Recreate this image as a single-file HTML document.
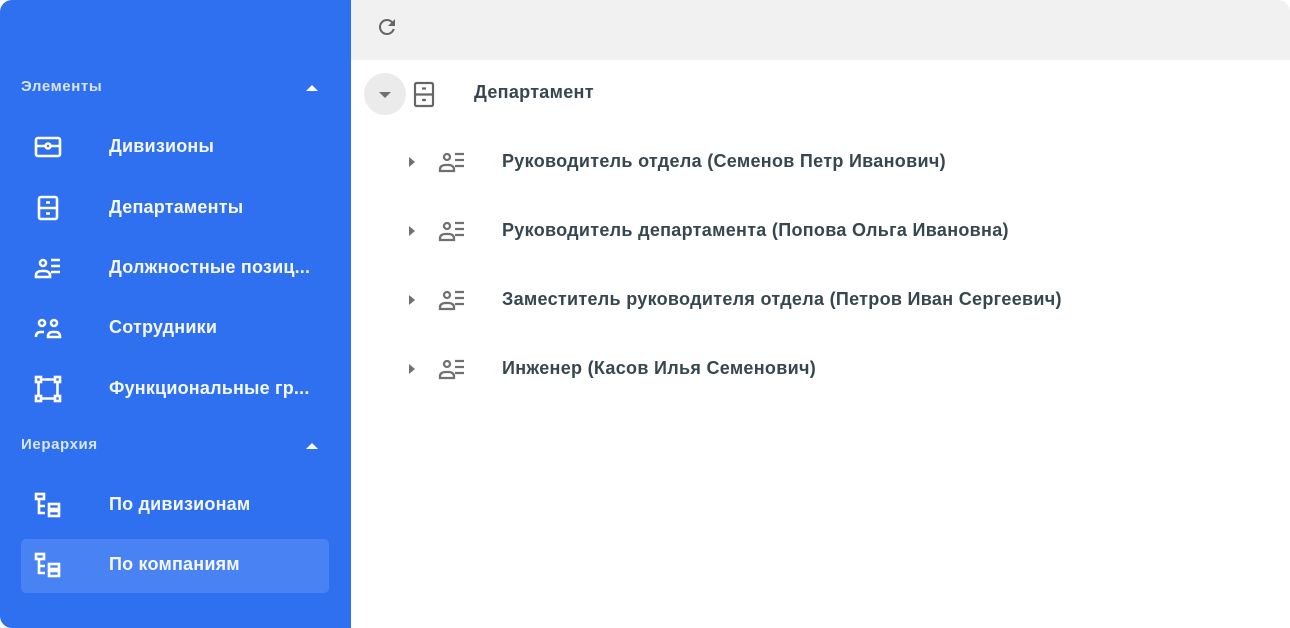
<!DOCTYPE html>
<html><head><meta charset="utf-8"><style>
*{margin:0;padding:0;box-sizing:border-box}
body{width:1290px;height:628px;background:#fff;font-family:"Liberation Sans",sans-serif;overflow:hidden;position:relative}
.frame{position:absolute;left:0;top:0;width:1290px;height:628px;border-radius:12px;overflow:hidden;background:#fff}
.side{position:absolute;left:0;top:0;width:351px;height:628px;background:#2f70f0;color:#fff}
.hdr{position:absolute;left:21px;font-size:15px;font-weight:bold;letter-spacing:0.6px;color:rgba(255,255,255,.82)}
.up{position:absolute;left:306px;width:0;height:0;border-left:6px solid transparent;border-right:6px solid transparent;border-bottom:6px solid #fff}
.it{position:absolute;left:109px;font-size:18px;font-weight:bold;letter-spacing:0.2px;color:#fff;opacity:.95}
.ic{position:absolute;left:34px}
.sel{position:absolute;left:21px;top:539px;width:308px;height:54px;background:rgba(255,255,255,.13);border-radius:5px}
.tb{position:absolute;left:351px;top:0;right:0;height:60px;background:#f1f1f1}
.t{position:absolute;font-size:18px;font-weight:bold;letter-spacing:0.3px;color:#37474f}
.tri{position:absolute;left:409px;width:0;height:0;border-top:5px solid transparent;border-bottom:5px solid transparent;border-left:6px solid #707070}
.circ{position:absolute;left:364px;top:73px;width:42px;height:42px;border-radius:50%;background:#ebebeb}
</style></head><body><div class="frame">
<div class="side">
<div class="hdr" style="top:78px">Элементы</div><div class="up" style="top:85px"></div>
<svg class="ic" style="top:135px" width="28" height="24" viewBox="0 0 28 24" fill="none" stroke="#fff" stroke-width="2.6"><rect x="2" y="3" width="24" height="18" rx="2"/><path d="M2 11h9M17 11h9"/><circle cx="14" cy="11" r="2.5"/></svg>
<div class="it" style="top:136px">Дивизионы</div>
<svg class="ic" style="top:195px;left:37px" width="22" height="26" viewBox="0 0 22 26" fill="none" stroke="#fff" stroke-width="2.6"><rect x="2" y="2" width="18" height="22" rx="2"/><path d="M2 13h18M9 7.5h4M9 18.5h4"/></svg>
<div class="it" style="top:197px">Департаменты</div>
<svg class="ic" style="top:256px" width="28" height="24" viewBox="0 0 28 24" fill="none" stroke="#fff" stroke-width="2.6"><circle cx="9" cy="7" r="3"/><path d="M2 21v-2a5 4 0 0 1 5-4h4a5 4 0 0 1 5 4v2zM17 4h9M17 10h9M17 16h9"/></svg>
<div class="it" style="top:257px">Должностные позиц...</div>
<svg class="ic" style="top:316px" width="28" height="24" viewBox="0 0 28 24" fill="none" stroke="#fff" stroke-width="2.6"><circle cx="8" cy="7" r="3"/><circle cx="20" cy="7" r="3"/><path d="M2 21v-1a4 4 0 0 1 4-4h4M14 21v-1a4 4 0 0 1 4-4h4a4 4 0 0 1 4 4v1z"/></svg>
<div class="it" style="top:317px">Сотрудники</div>
<svg class="ic" style="top:375px" width="28" height="28" viewBox="0 0 28 28" fill="none" stroke="#fff" stroke-width="2.6"><rect x="2" y="2" width="5" height="5"/><rect x="21" y="2" width="5" height="5"/><rect x="2" y="21" width="5" height="5"/><rect x="21" y="21" width="5" height="5"/><path d="M7 4.5h14M7 23.5h14M4.5 7v14M23.5 7v14"/></svg>
<div class="it" style="top:378px">Функциональные гр...</div>
<div class="hdr" style="top:436px">Иерархия</div><div class="up" style="top:443px"></div>
<svg class="ic" style="top:492px" width="28" height="28" viewBox="0 0 28 28" fill="none" stroke="#fff" stroke-width="2.6"><rect x="2" y="2" width="8" height="5"/><path d="M5 7v14h6M5 14h6"/><rect x="15" y="12" width="10" height="5"/><rect x="15" y="19" width="10" height="5"/></svg>
<div class="it" style="top:494px">По дивизионам</div>
<div class="sel"></div>
<svg class="ic" style="top:552px" width="28" height="28" viewBox="0 0 28 28" fill="none" stroke="#fff" stroke-width="2.6"><rect x="2" y="2" width="8" height="5"/><path d="M5 7v14h6M5 14h6"/><rect x="15" y="12" width="10" height="5"/><rect x="15" y="19" width="10" height="5"/></svg>
<div class="it" style="top:554px">По компаниям</div>
</div>
<div class="tb"><svg style="position:absolute;left:24px;top:15px" width="24" height="24" viewBox="0 0 24 24"><path fill="#666" d="M17.65 6.35A7.958 7.958 0 0 0 12 4a8 8 0 1 0 7.73 10h-2.08A6 6 0 1 1 12 6c1.66 0 3.14.69 4.22 1.78L13 11h7V4l-2.35 2.35z"/></svg></div>
<div class="circ"></div>
<div style="position:absolute;left:379px;top:92px;border-left:6px solid transparent;border-right:6px solid transparent;border-top:6px solid #707070"></div>
<svg style="position:absolute;left:413px;top:81px" width="22" height="27" viewBox="0 0 22 27" fill="none" stroke="#666" stroke-width="2.2"><rect x="2" y="2" width="18" height="23" rx="1.5"/><path d="M2 13.5h18M9 7.5h4M9 19h4"/></svg>
<div class="t" style="top:82px;left:474px">Департамент</div>
<div class="tri" style="top:157px"></div>
<svg style="position:absolute;left:437px;top:150px" width="30" height="24" viewBox="0 0 28 24" fill="none" stroke="#707070" stroke-width="2.3"><circle cx="9" cy="7" r="3"/><path d="M2 21v-2a5 4 0 0 1 5-4h4a5 4 0 0 1 5 4v2zM17 4h9M17 10h9M17 16h9"/></svg>
<div class="t" style="top:151px;left:502px">Руководитель отдела (Семенов Петр Иванович)</div>
<div class="tri" style="top:226px"></div>
<svg style="position:absolute;left:437px;top:219px" width="30" height="24" viewBox="0 0 28 24" fill="none" stroke="#707070" stroke-width="2.3"><circle cx="9" cy="7" r="3"/><path d="M2 21v-2a5 4 0 0 1 5-4h4a5 4 0 0 1 5 4v2zM17 4h9M17 10h9M17 16h9"/></svg>
<div class="t" style="top:220px;left:502px">Руководитель департамента (Попова Ольга Ивановна)</div>
<div class="tri" style="top:295px"></div>
<svg style="position:absolute;left:437px;top:288px" width="30" height="24" viewBox="0 0 28 24" fill="none" stroke="#707070" stroke-width="2.3"><circle cx="9" cy="7" r="3"/><path d="M2 21v-2a5 4 0 0 1 5-4h4a5 4 0 0 1 5 4v2zM17 4h9M17 10h9M17 16h9"/></svg>
<div class="t" style="top:289px;left:502px">Заместитель руководителя отдела (Петров Иван Сергеевич)</div>
<div class="tri" style="top:364px"></div>
<svg style="position:absolute;left:437px;top:357px" width="30" height="24" viewBox="0 0 28 24" fill="none" stroke="#707070" stroke-width="2.3"><circle cx="9" cy="7" r="3"/><path d="M2 21v-2a5 4 0 0 1 5-4h4a5 4 0 0 1 5 4v2zM17 4h9M17 10h9M17 16h9"/></svg>
<div class="t" style="top:358px;left:502px">Инженер (Касов Илья Семенович)</div>
</div></body></html>
